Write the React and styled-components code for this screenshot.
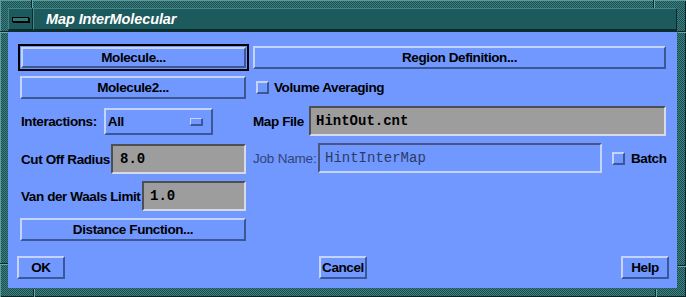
import React from "react";
import styled, { createGlobalStyle, css } from "styled-components";

const BLUE = "#7098ff";
const LIGHT = "#c4d4ff";
const DARK = "#3c5795";

const Global = createGlobalStyle`
  html, body { margin: 0; padding: 0; background: #000; }
  #root { width: 686px; height: 297px; }
  * { box-sizing: border-box; }
`;

const raised = css`
  border-style: solid;
  border-width: 2px;
  border-color: ${LIGHT} ${DARK} ${DARK} ${LIGHT};
`;

const Window = styled.div`
  position: relative;
  width: 686px;
  height: 297px;
  padding: 8px 9px 9px 8px;
  display: flex;
  flex-direction: column;
  background-color: #2b6566;
  background-image: repeating-conic-gradient(#3f8182 0 25%, #1c4d4f 0 50%);
  background-size: 2px 2px;
  box-shadow: inset 1px 1px 0 #5a9d9e, inset -1px -1px 0 #0a2324;
`;

const Notch = styled.span`
  position: absolute;
  ${(p) =>
    p.$v
      ? css`
          width: 2px;
          height: 8px;
          border-left: 1px solid #0c2a2b;
          border-right: 1px solid #6aa9aa;
        `
      : css`
          width: 8px;
          height: 2px;
          border-top: 1px solid #0c2a2b;
          border-bottom: 1px solid #6aa9aa;
        `}
`;

const TitleBar = styled.div`
  height: 24px;
  display: flex;
  border-bottom: 2px solid #0e2d2f;
  box-shadow: inset 0 1px 0 #0e2d2f, inset 1px 0 0 #0e2d2f;
`;

const MenuBtn = styled.div`
  width: 25px;
  height: 22px;
  display: flex;
  align-items: center;
  justify-content: center;
  background: #1d5a5e;
  border-top: 1px solid #3f8789;
  border-left: 1px solid #3f8789;
  border-right: 1px solid #0b2a2c;
  border-bottom: 1px solid #0b2a2c;
`;

const MenuBar = styled.span`
  display: block;
  width: 17px;
  height: 5px;
  background: #2f7a7c;
  border: 1px solid #000;
  box-shadow: 1px 1px 0 #000;
`;

const TitleArea = styled.div`
  flex: 1;
  height: 22px;
  display: flex;
  align-items: center;
  padding-left: 12px;
  background: #1d5a5e;
  border-top: 1px solid #3f8789;
  border-left: 1px solid #3f8789;
  border-right: 1px solid #0b2a2c;
  border-bottom: 1px solid #0b2a2c;
  color: #fff;
  font-family: "Liberation Sans", Arial, sans-serif;
  font-style: italic;
  font-weight: bold;
  font-size: 14.5px;
  letter-spacing: -0.1px;
`;

const Content = styled.div`
  flex: 1;
  background: ${BLUE};
  padding: 0 8px 9px 9px;
  display: flex;
  flex-direction: column;
  font-family: "Liberation Sans", Arial, sans-serif;
  font-weight: bold;
  font-size: 13.5px;
  letter-spacing: -0.4px;
  color: #000;
`;

const Main = styled.div`
  display: flex;
  gap: 4px;
  padding: 0 3px 0 1px;
`;

const LeftCol = styled.div`
  width: 231px;
  flex: none;
  display: flex;
  flex-direction: column;
  padding-top: 12px;
`;

const RightCol = styled.div`
  flex: 1;
  min-width: 0;
  display: flex;
  flex-direction: column;
  padding-top: 14px;
`;

const DefaultFrame = styled.div`
  height: 27px;
  border: 2px solid #000;
  padding: 1px;
  display: flex;
`;

const Button = styled.div`
  ${raised};
  height: ${(p) => p.$h || 23}px;
  ${(p) => (p.$w ? `width: ${p.$w}px; flex: none;` : "flex: 1;")}
  margin: ${(p) => p.$m || "0"};
  display: flex;
  align-items: center;
  justify-content: center;
  background: ${BLUE};
  white-space: nowrap;
`;

const BarButton = styled(Button)`
  flex: none;
`;

const Row = styled.div`
  display: flex;
  align-items: center;
  height: ${(p) => p.$h}px;
  margin-top: ${(p) => p.$mt}px;
  padding-left: ${(p) => p.$pl || 0}px;
  padding-right: ${(p) => p.$pr || 0}px;
`;

const Label = styled.span`
  white-space: nowrap;
  width: ${(p) => (p.$w ? `${p.$w}px` : "auto")};
  flex-shrink: 0;
  ${(p) =>
    p.$dim &&
    css`
      font-weight: normal;
      letter-spacing: -0.2px;
      color: #27365f;
      opacity: 0.85;
    `}
`;

const OptionMenu = styled.div`
  ${raised};
  width: 109px;
  height: 27px;
  margin-left: 7px;
  display: flex;
  align-items: center;
  justify-content: space-between;
  padding: 0 8px 0 2px;
`;

const Indicator = styled.span`
  width: 13px;
  height: 8px;
  border-style: solid;
  border-width: 1px 2px 2px 1px;
  border-color: ${LIGHT} ${DARK} ${DARK} ${LIGHT};
  background: ${BLUE};
`;

const Field = styled.div`
  height: 30px;
  ${(p) => (p.$w ? `width: ${p.$w}px; flex: none; margin-left: auto;` : "flex: 1; min-width: 0;")}
  border-style: solid;
  border-width: 2px;
  border-color: ${(p) =>
    p.$dim ? `#4a5580 ${LIGHT} ${LIGHT} #4a5580` : "#4f4f4f #d6d9e6 #d6d9e6 #4f4f4f"};
  background: ${(p) => (p.$dim ? BLUE : "#9d9d9d")};
  display: flex;
  align-items: center;
  padding-left: ${(p) => p.$pl || 6}px;
  font-family: "Liberation Mono", "Courier New", monospace;
  font-weight: ${(p) => (p.$dim ? "normal" : "bold")};
  font-size: 14px;
  letter-spacing: 0;
  color: ${(p) => (p.$dim ? "#2c3b66" : "#000")};
  white-space: nowrap;
`;

const DimField = styled(Field)`
  margin-left: 0;
`;

const Check = styled.span`
  width: 13px;
  height: 13px;
  flex-shrink: 0;
  margin-left: ${(p) => p.$ml}px;
  margin-right: ${(p) => p.$mr}px;
  ${raised};
  background: ${BLUE};
`;

const BottomRow = styled.div`
  margin-top: auto;
  display: flex;
  justify-content: space-between;
`;

export default function App() {
  return (
    <>
      <Global />
      <Window>
        <Notch $v style={{ left: 31, top: 0 }} />
        <Notch style={{ left: 0, top: 31 }} />
        <Notch $v style={{ left: 653, top: 0 }} />
        <Notch style={{ right: 0, top: 31 }} />
        <Notch $v style={{ left: 33, bottom: 0 }} />
        <Notch style={{ left: 0, top: 263 }} />
        <Notch $v style={{ left: 655, bottom: 0 }} />
        <Notch style={{ right: 0, top: 265 }} />
        <TitleBar>
          <MenuBtn>
            <MenuBar />
          </MenuBtn>
          <TitleArea>Map InterMolecular</TitleArea>
        </TitleBar>
        <Content>
          <Main>
            <LeftCol>
              <DefaultFrame>
                <Button $h={21}>Molecule...</Button>
              </DefaultFrame>
              <BarButton $m="5px 3px 0 2px">Molecule2...</BarButton>
              <Row $h={27} $mt={9} $pl={3}>
                <Label>Interactions:</Label>
                <OptionMenu>
                  <span>All</span>
                  <Indicator />
                </OptionMenu>
              </Row>
              <Row $h={30} $mt={9} $pl={3} $pr={3}>
                <Label>Cut Off Radius</Label>
                <Field $w={135} $pl={7}>
                  8.0
                </Field>
              </Row>
              <Row $h={30} $mt={7} $pl={3} $pr={3}>
                <Label>Van der Waals Limit</Label>
                <Field $w={104} $pl={6}>
                  1.0
                </Field>
              </Row>
              <BarButton $m="7px 3px 0 2px">Distance Function...</BarButton>
            </LeftCol>
            <RightCol>
              <BarButton>Region Definition...</BarButton>
              <Row $h={19} $mt={9}>
                <Check $ml={3} $mr={5} />
                <Label>Volume Averaging</Label>
              </Row>
              <Row $h={30} $mt={9}>
                <Label $w={56}>Map File</Label>
                <Field $pl={5}>HintOut.cnt</Field>
              </Row>
              <Row $h={30} $mt={7}>
                <Label $w={65} $dim>
                  Job Name:
                </Label>
                <DimField $w={284} $dim $pl={5}>
                  HintInterMap
                </DimField>
                <Check $ml={10} $mr={6} />
                <Label>Batch</Label>
              </Row>
            </RightCol>
          </Main>
          <BottomRow>
            <Button $w={48}>OK</Button>
            <Button $w={48}>Cancel</Button>
            <Button $w={48}>Help</Button>
          </BottomRow>
        </Content>
      </Window>
    </>
  );
}
